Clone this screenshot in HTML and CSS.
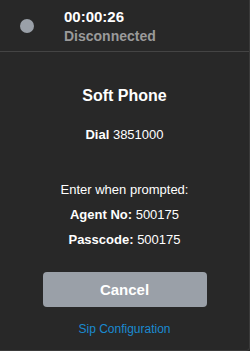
FILE: index.html
```html
<!DOCTYPE html>
<html lang="en">
<head>
	<meta charset="UTF-8">
	<title>Soft Phone</title>
	<link rel="stylesheet" href="styles.css">
</head>
<body>
	<div class="phone">
		<div class="status-bar">
			<span class="status-dot"></span>
			<div class="status-text">
				<span class="timer">00:00:26</span>
				<span class="state">Disconnected</span>
			</div>
		</div>
		<div class="content">
			<div class="title">Soft Phone</div>
			<div class="line dial"><b>Dial</b> 3851000</div>
			<div class="line prompt">Enter when prompted:</div>
			<div class="line"><b>Agent No:</b> 500175</div>
			<div class="line"><b>Passcode:</b> 500175</div>
			<button class="cancel">Cancel</button>
			<a class="sip-link" href="#">Sip Configuration</a>
		</div>
	</div>
</body>
</html>
```

FILE: styles.css
```css
body {
	margin: 0;
	background: #282828;
	font-family: 'Liberation Sans', Arial, sans-serif;
	-webkit-font-smoothing: antialiased;
}

.phone {
	width: 250px;
	height: 351px;
	box-sizing: border-box;
	background: #282828;
	border-right: 1px solid #3a3a3a;
	border-bottom: 1px solid #3a3a3a;
	border-bottom-right-radius: 4px;
	display: flex;
	flex-direction: column;
}

.status-bar {
	height: 52px;
	box-sizing: border-box;
	border-bottom: 1px solid #444;
	display: flex;
	align-items: center;
}

.status-dot {
	width: 14px;
	height: 14px;
	border-radius: 50%;
	background: #9aa0a8;
	margin-left: 20px;
	margin-right: 30px;
}

.status-text {
	display: flex;
	flex-direction: column;
	margin-top: 2px;
}

.timer {
	color: #fff;
	font-weight: 700;
	font-size: 15px;
	line-height: 18px;
}

.state {
	color: #9a9a9a;
	font-weight: 700;
	font-size: 14px;
	line-height: 20px;
}

.content {
	display: flex;
	flex-direction: column;
	align-items: center;
	color: #fff;
}

.title {
	font-weight: 700;
	font-size: 16px;
	margin-top: 34px;
	line-height: 20px;
}

.line {
	font-size: 13px;
	line-height: 16px;
	margin-top: 9px;
}

.dial {
	margin-top: 21px;
}

.prompt {
	margin-top: 39px;
}

.cancel {
	margin-top: 24px;
	width: 164px;
	height: 35px;
	border: none;
	border-radius: 4px;
	background: #9aa0a8;
	color: #fff;
	font-family: inherit;
	font-weight: 700;
	font-size: 15px;
}

.sip-link {
	margin-top: 15px;
	color: #1a8ad0;
	font-size: 12px;
	text-decoration: none;
}
```
